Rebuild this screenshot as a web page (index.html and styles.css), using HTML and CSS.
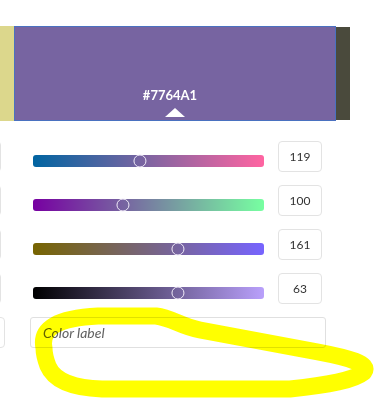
FILE: index.html
```html
<!DOCTYPE html>
<html lang="en">
<head>
  <meta charset="UTF-8">
  <title>Color picker</title>
  <link rel="stylesheet" href="styles.css">
</head>
<body>
  <div class="picker">
    <div class="swatches">
      <div class="swatch swatch-prev"></div>
      <div class="swatch swatch-current">
        <span class="hex">#7764A1</span>
        <span class="caret"></span>
      </div>
      <div class="swatch swatch-next"></div>
    </div>

    <div class="channels">
      <div class="channel">
        <div class="stub"></div>
        <div class="track-wrap">
          <div class="track track-r">
            <span class="thumb" style="left: 46.7%"></span>
          </div>
        </div>
        <div class="value">119</div>
      </div>
      <div class="channel">
        <div class="stub"></div>
        <div class="track-wrap">
          <div class="track track-g">
            <span class="thumb" style="left: 39.2%"></span>
          </div>
        </div>
        <div class="value">100</div>
      </div>
      <div class="channel">
        <div class="stub"></div>
        <div class="track-wrap">
          <div class="track track-b">
            <span class="thumb" style="left: 63.1%"></span>
          </div>
        </div>
        <div class="value">161</div>
      </div>
      <div class="channel">
        <div class="stub"></div>
        <div class="track-wrap">
          <div class="track track-v">
            <span class="thumb" style="left: 63%"></span>
          </div>
        </div>
        <div class="value">63</div>
      </div>

      <div class="label-row">
        <div class="stub stub-wide"></div>
        <input class="label-input" type="text" placeholder="Color label">
      </div>
    </div>
  </div>

  <!-- highlighter scribble drawn over the page -->
  <svg class="scribble" width="376" height="404" viewBox="0 0 376 404">
    <path d="M44 348 C40 328 58 318 98 316 L156 316 C172 318 180 326 200 330 L318 352 C350 358 370 364 364 372 C354 380 330 385 290 389 L102 389 C72 388 54 380 48 366 C45 358 44 352 44 348 Z"/>
  </svg>
</body>
</html>
```

FILE: styles.css
```css
body {
  margin: 0;
  width: 376px;
  height: 404px;
  overflow: hidden;
  background: #fff;
  font-family: Lato, "Open Sans", sans-serif;
  position: relative;
}
.picker {
  padding-top: 26px;
}
.swatches {
  display: flex;
  height: 95px;
}
.swatch {
  box-sizing: border-box;
}
.swatch-prev {
  width: 14px;
  background: #dcd78c;
}
.swatch-current {
  width: 322px;
  background: #7764a1;
  border: 1px solid #4a71c0;
  display: flex;
  flex-direction: column;
  align-items: center;
  justify-content: flex-end;
  padding-bottom: 3px;
}
.swatch-next {
  width: 14px;
  margin: 1px 0 1px 0;
  background: #4a4a3c;
}
.hex {
  color: #fff;
  font-weight: bold;
  font-size: 13px;
  margin-right: 10px;
  line-height: 14px;
}
.caret {
  margin-top: 6px;
  width: 0;
  height: 0;
  border-left: 10px solid transparent;
  border-right: 10px solid transparent;
  border-bottom: 9px solid #fff;
}
.channels {
  margin-top: 20px;
  display: flex;
  flex-direction: column;
  gap: 13px;
}
.channel, .label-row {
  display: flex;
  align-items: flex-start;
  height: 31px;
}
.stub {
  box-sizing: border-box;
  width: 40px;
  height: 31px;
  margin-left: -39px;
  border: 1px solid #e3e3e3;
  border-radius: 4px;
}
.stub-wide {
  margin-left: -35px;
}
.track-wrap {
  margin-left: 32px;
  width: 231px;
  padding-top: 14px;
}
.track {
  position: relative;
  height: 12px;
  border-radius: 3px;
}
.track-r { background: linear-gradient(to right, #0064a1, #ff64a1); }
.track-g { background: linear-gradient(to right, #7700a1, #77ffa1); }
.track-b { background: linear-gradient(to right, #776400, #7764ff); }
.track-v { background: linear-gradient(to right, #000, #b9a0fb); }
.thumb {
  position: absolute;
  top: 50%;
  width: 13px;
  height: 13px;
  box-sizing: border-box;
  border: 1.5px solid #f0eaf8;
  border-radius: 50%;
  transform: translate(-58%, -50%);
}
.value {
  box-sizing: border-box;
  margin-left: 14px;
  width: 44px;
  height: 31px;
  border: 1px solid #e3e3e3;
  border-radius: 4px;
  display: flex;
  align-items: center;
  justify-content: center;
  font-size: 12px;
  color: #333;
}
.label-input {
  box-sizing: border-box;
  margin: 0 0 0 25px;
  width: 296px;
  height: 31px;
  border: 1px solid #e0e0e0;
  border-radius: 3px;
  padding: 0 12px;
  font-family: Lato, "Open Sans", sans-serif;
  font-size: 14px;
  font-style: italic;
  outline: none;
}
.label-input::placeholder {
  color: #626262;
}
.scribble {
  position: absolute;
  top: 0;
  left: 0;
  pointer-events: none;
  mix-blend-mode: multiply;
}
.scribble path {
  fill: none;
  stroke: #ffff00;
  stroke-width: 17;
  stroke-linejoin: round;
}
```
